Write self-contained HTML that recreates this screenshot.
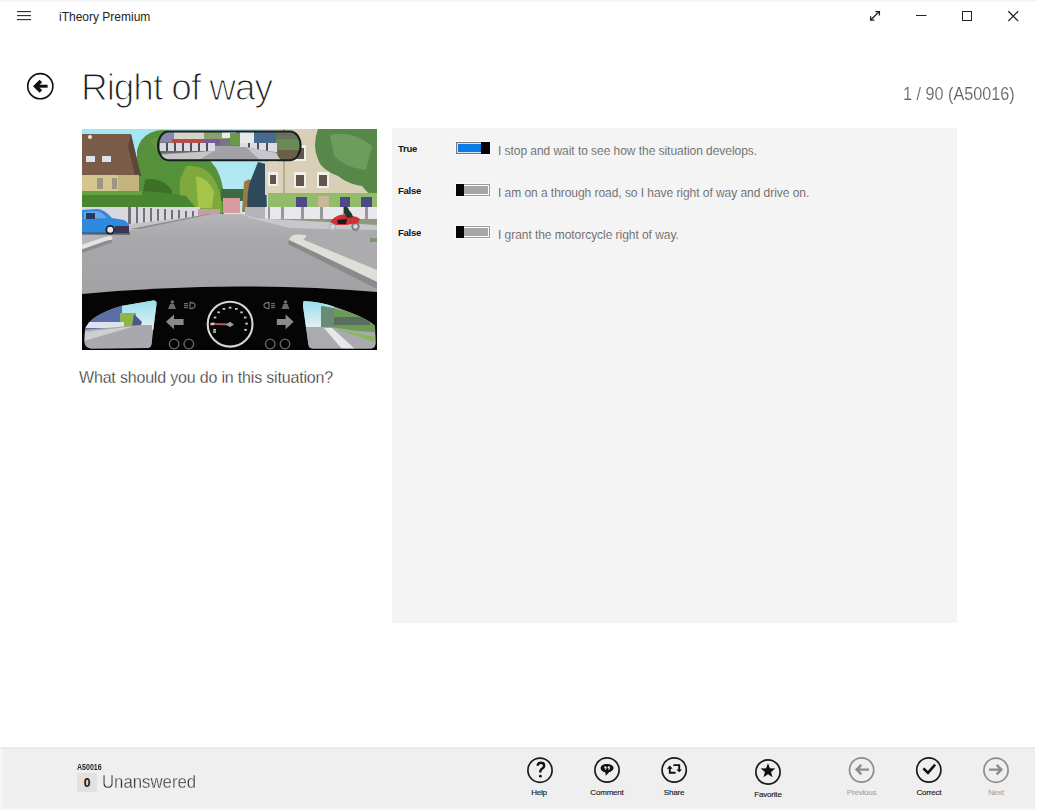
<!DOCTYPE html>
<html><head><meta charset="utf-8">
<style>
html,body{margin:0;padding:0;}
body{width:1037px;height:810px;position:relative;overflow:hidden;background:#fff;font-family:"Liberation Sans",sans-serif;}
.a{position:absolute;}
.t{position:absolute;white-space:nowrap;line-height:1;}
.lbl{font-size:9.6px;font-weight:bold;color:#151515;letter-spacing:-0.3px;}
.ans{font-size:12px;color:#4a4a4a;letter-spacing:-0.05px;-webkit-text-stroke:0.2px #f4f4f4;}
.ab{font-size:8px;color:#222;text-align:center;letter-spacing:-0.2px;-webkit-text-stroke:0.15px currentColor;}
</style></head><body>
<!-- top border -->
<div class="a" style="left:0;top:0;width:1037px;height:1px;background:#f3f3f3"></div><div class="a" style="left:0;top:1px;width:1037px;height:1px;background:#fafafa"></div>
<!-- title bar -->
<svg class="a" style="left:0;top:0" width="1037" height="32">
  <g stroke="#2a2a2a" stroke-width="1.1">
    <line x1="17" y1="11.6" x2="31" y2="11.6"/>
    <line x1="17" y1="15.6" x2="31" y2="15.6"/>
    <line x1="17" y1="19.6" x2="31" y2="19.6"/>
  </g>
  <g stroke="#222" stroke-width="1" fill="none">
    <line x1="871" y1="19.8" x2="879" y2="11.8" stroke-width="1.3"/>
    <polyline points="875.3,11.6 879.4,11.6 879.4,15.4" stroke-width="1.3"/>
    <polyline points="870.6,16.2 870.6,20.2 874.4,20.2" stroke-width="1.3"/>
    <line x1="916" y1="15.5" x2="926.5" y2="15.5"/>
    <rect x="962.5" y="11.5" width="9" height="9"/>
    <line x1="1008.3" y1="11.2" x2="1018.2" y2="21.1" stroke-width="1.25"/>
    <line x1="1018.2" y1="11.2" x2="1008.3" y2="21.1" stroke-width="1.25"/>
  </g>
</svg>
<div class="t" id="apptitle" style="left:59px;top:11px;font-size:12px;color:#222">iTheory Premium</div>

<!-- back button -->
<svg class="a" style="left:20px;top:66px" width="42" height="42">
  <circle cx="20.3" cy="20.2" r="12.55" fill="none" stroke="#111" stroke-width="1.65"/>
  <polygon points="13,20.2 19.6,13.7 22.2,16.2 18.2,20.2 22.2,24.2 19.6,26.7" fill="#111"/><rect x="17" y="18.7" width="10.6" height="3" fill="#111"/>
</svg>
<div class="t" id="title" style="left:81px;top:69px;font-size:37px;color:#1e1e1e;letter-spacing:-1.05px;-webkit-text-stroke:1.2px #fff">Right of way</div>
<div class="t" id="counter" style="left:903px;top:85px;font-size:18.5px;color:#606060;transform:scaleX(0.875);transform-origin:0 0;-webkit-text-stroke:0.15px #fff">1 / 90 (A50016)</div>

<!-- picture -->
<svg class="a" style="left:82px;top:129px" width="295" height="221" viewBox="82 129 295 221">
 <defs>
  <linearGradient id="sky" x1="0" y1="0" x2="0" y2="1">
   <stop offset="0" stop-color="#a2e6f4"/><stop offset="0.3" stop-color="#b8e8f2"/><stop offset="0.45" stop-color="#dcecf0"/><stop offset="1" stop-color="#e6eef0"/>
  </linearGradient>
  <linearGradient id="road" x1="0" y1="0" x2="0" y2="1">
   <stop offset="0" stop-color="#b6b6b8"/><stop offset="0.3" stop-color="#a8a8ab"/><stop offset="1" stop-color="#a2a2a5"/>
  </linearGradient>
  <linearGradient id="msky" x1="0" y1="0" x2="0" y2="1">
   <stop offset="0" stop-color="#94e0ef"/><stop offset="1" stop-color="#e6f0f0"/>
  </linearGradient>
  <filter id="bl" x="-5%" y="-5%" width="110%" height="110%"><feGaussianBlur stdDeviation="0.6"/></filter>
 </defs>
 <rect x="82" y="129" width="295" height="221" fill="url(#sky)"/>
 <g filter="url(#bl)">
 <!-- left trees (behind house) -->
 <rect x="131" y="158" width="14" height="34" fill="#9a6a50"/>
 <path d="M137,150 Q140,138 150,133 Q160,128 170,131 Q186,136 194,150 Q208,156 216,168 Q226,186 224,214 L137,214 Z" fill="#55903a"/>
 <path d="M150,140 Q162,134 174,140 Q170,152 158,152 Z" fill="#62983e"/>
 <path d="M186,166 Q202,164 212,176 Q222,190 222,212 L184,212 Q178,196 180,180 Z" fill="#7eaa3c"/>
 <path d="M196,176 Q208,178 214,192 L212,208 L198,208 Z" fill="#a6c44a"/>
 <path d="M145,180 Q160,176 172,190 L172,212 L140,212 Z" fill="#3c7028"/>
 <!-- left house -->
 <polygon points="82,134 131,134 137,160 141,176 82,176" fill="#7a5c4a"/>
 <polygon points="131,134 141,176 135,176 128,146" fill="#5f4636"/>
 <rect x="86" y="156" width="9" height="6" fill="#dfe2ec"/>
 <rect x="102" y="156" width="9" height="6" fill="#dfe2ec"/>
 <circle cx="90" cy="137" r="2" fill="#e8e8e8"/>
 <rect x="82" y="175" width="57" height="18" fill="#d4c68c"/>
 <rect x="118" y="175" width="21" height="18" fill="#c2b47c"/>
 <rect x="97" y="178" width="6" height="11" fill="#9a9684"/>
 <rect x="112" y="178" width="5" height="11" fill="#9a9684"/>
 <!-- hedge -->
 <path d="M82,193 L140,191 Q165,192 186,196 L196,208 L82,208 Z" fill="#4a8630"/>
 <rect x="82" y="191" width="60" height="4" fill="#66a040"/>
 <!-- far -->
 <rect x="221" y="189" width="24" height="12" fill="#3c6a40"/>
 <rect x="223" y="198" width="17" height="15" fill="#d69aa0"/>
 <path d="M244,182 Q250,176 254,184 L256,212 L242,212 Z" fill="#9a7a48"/>
 <!-- conifer -->
 <path d="M258,162 L266,164 L267,216 L248,216 Q246,196 250,182 Z" fill="#2e4a5a"/>
 <!-- building -->
 <rect x="265" y="129" width="112" height="66" fill="#d8cfb6"/>
 <rect x="265" y="129" width="18" height="66" fill="#ddd3bc"/>
 <rect x="283" y="129" width="2" height="66" fill="#b8ae96"/>
 <g fill="#f2f0ea"><rect x="294" y="172" width="12" height="16"/><rect x="317" y="172" width="12" height="16"/><rect x="294" y="145" width="12" height="16"/><rect x="317" y="145" width="12" height="16"/><rect x="268" y="148" width="10" height="14"/><rect x="268" y="172" width="10" height="14"/></g>
 <g fill="#5e5650"><rect x="296" y="175" width="8" height="11"/><rect x="319" y="175" width="8" height="11"/><rect x="296" y="148" width="8" height="11"/><rect x="319" y="148" width="8" height="11"/><rect x="270" y="151" width="6" height="9"/><rect x="270" y="175" width="6" height="9"/></g>
 <path d="M318,129 L377,129 L377,198 Q370,196 362,186 Q348,184 338,176 Q322,170 318,160 Q312,145 318,129 Z" fill="#58884a"/>
 <path d="M330,135 Q352,130 372,146 L366,170 Q346,168 334,156 Z" fill="#6e9c5a"/>
 <rect x="268" y="193" width="109" height="16" fill="#92bc6a"/>
 <g fill="#4e4a86"><rect x="296" y="197" width="11" height="10"/><rect x="340" y="197" width="10" height="10"/><rect x="361" y="197" width="11" height="10"/></g>
 <rect x="318" y="196" width="11" height="13" fill="#c8b898"/>
 <!-- right fence -->
 <rect x="265" y="207" width="112" height="13" fill="#e8e8ec"/>
 <g fill="#98989c"><rect x="268" y="207" width="2" height="13"/><rect x="281" y="207" width="3" height="13"/><rect x="301" y="207" width="3" height="13"/><rect x="320" y="207" width="3" height="13"/><rect x="343" y="207" width="3" height="13"/><rect x="365" y="207" width="3" height="13"/></g>
 <rect x="245" y="207" width="20" height="12" fill="#b4b4b8"/>
 <rect x="256" y="219" width="121" height="6" fill="#8e9a80"/>
 <!-- left fence -->
 <rect x="82" y="207" width="118" height="17" fill="#d8d8de"/>
 <g fill="#707076">
  <rect x="128" y="207" width="3" height="18"/><rect x="136" y="207" width="2" height="17"/><rect x="143" y="208" width="2" height="16"/>
  <rect x="150" y="208" width="2" height="15"/><rect x="157" y="209" width="2" height="14"/><rect x="164" y="209" width="2" height="13"/>
  <rect x="171" y="210" width="2" height="12"/><rect x="178" y="210" width="2" height="11"/><rect x="185" y="211" width="2" height="10"/><rect x="192" y="211" width="2" height="9"/>
 </g>
 <rect x="198" y="209" width="22" height="8" fill="#c4a0a4"/>
 </g>
 <!-- road -->
 <polygon points="82,236 130,229 208,214 242,214 300,228 377,229 377,296 82,296" fill="url(#road)"/>
 <!-- left sidewalk -->
 <polygon points="129,224 200,216 212,214 140,229 129,230" fill="#c4c4c6"/>
 <polygon points="130,229 140,229 212,214 208,214" fill="#8a8a8e"/>
 <!-- right sidewalk far -->
 <polygon points="242,214 256,218 377,225 377,230 290,228 250,218" fill="#c8c8ca"/>
 <!-- left island -->
 <polygon points="82,234.5 113,234.5 112,238 82,246" fill="#b6b6ba"/>
 <polygon points="82,244.5 105,237 110,236 112.5,237 112,239.8 106,241 82,249.5" fill="#e4e4e2"/>
 <polygon points="82,249.5 106,241 112,239.8 112,242.5 82,253" fill="#8c8c90"/>
 <!-- right island & curb -->
 <path d="M292,237 Q296,235 304,235 L377,236 L377,272 Q340,258 302,241 Z" fill="#acacae"/>
 <path d="M289,240 Q290,234.5 298,234.5 L306,235 Q306,238 303,239.5 L377,270 L377,282 Z" fill="#e0ded8"/>
 <path d="M289,240 L377,282 L377,289 L288,244 Z" fill="#8a8a8c"/>
 <rect x="370" y="238" width="7" height="4" fill="#7a9a6a"/>
 <!-- blue car -->
 <path d="M82,210 L97,209 Q104,209 112,218 L124,220 Q130,223 129,229 L129,233 L82,233.5 Z" fill="#2f8ade"/>
 <path d="M84,212 L97,211 Q102,212 107,218 L84,219 Z" fill="#6aa6e4"/>
 <rect x="86" y="213" width="9" height="6" fill="#243a60"/>
 <rect x="82" y="232.5" width="48" height="2.2" fill="#3a3a40" opacity="0.7"/>
 <circle cx="110.2" cy="229.8" r="4.8" fill="#1e1e26"/><circle cx="110.2" cy="229.8" r="3" fill="#e8e8e8"/>
 <rect x="115" y="226" width="14" height="7" fill="#3e3452"/>
 <!-- motorcycle -->
 <circle cx="332.5" cy="227" r="3.8" fill="#b8b8bc"/><circle cx="332.5" cy="227" r="2" fill="#e0d8d8"/>
 <circle cx="355.5" cy="226.5" r="4.2" fill="#7a7e80"/><circle cx="355.5" cy="226.5" r="2.2" fill="#d8dcdc"/>
 <path d="M330,222 Q334,216 342,214.5 L350,216 Q357,216 360,219 L358,223 L346,225 L336,225 Z" fill="#d03036"/>
 <path d="M337,220 L347,219 L346,224 L338,224 Z" fill="#1a1a1e"/>
 <path d="M344,207 Q348,206 349,210 L352,214 L353,217 L347,218 L344,213 Z" fill="#1e3a2a"/>
 <!-- rear view mirror -->
 <clipPath id="rm"><rect x="158" y="131.4" width="142.6" height="28.8" rx="10.5" ry="14.4"/></clipPath>
 <rect x="158" y="131.4" width="142.6" height="28.8" rx="10.5" ry="14.4" fill="#a4a4a6"/>
 <g clip-path="url(#rm)" filter="url(#bl)">
  <rect x="157" y="130" width="145" height="16" fill="#7a7484"/>
  <rect x="160" y="130" width="14" height="12" fill="#8a86b0"/>
  <rect x="174" y="131" width="30" height="9" fill="#d6d2c8"/>
  <rect x="172" y="139" width="36" height="6" fill="#b05048"/>
  <rect x="204" y="139" width="16" height="6" fill="#7a5a9a"/>
  <rect x="204" y="131" width="24" height="8" fill="#8aa070"/>
  <rect x="222" y="130" width="14" height="8" fill="#e8ecea"/>
  <rect x="230" y="133" width="14" height="12" fill="#6a9a4a"/>
  <rect x="240" y="130" width="14" height="16" fill="#e6e8ea"/>
  <rect x="254" y="130" width="22" height="15" fill="#4a6a90"/>
  <rect x="276" y="130" width="26" height="10" fill="#6a7060"/>
  <rect x="276" y="139" width="26" height="23" fill="#6a8a52"/>
  <rect x="278" y="150" width="24" height="12" fill="#6a5e48"/>
  <rect x="160" y="143" width="55" height="9" fill="#dadae2"/>
  <g fill="#50505a"><rect x="166" y="143" width="2" height="9"/><rect x="174" y="143" width="2" height="9"/><rect x="182" y="143" width="2" height="9"/><rect x="190" y="143" width="2" height="9"/><rect x="198" y="143" width="2" height="9"/><rect x="206" y="143" width="2" height="9"/></g>
  <rect x="240" y="143" width="37" height="9" fill="#dcdce4"/>
  <g fill="#50505a"><rect x="248" y="143" width="2" height="9"/><rect x="257" y="143" width="2" height="9"/><rect x="266" y="143" width="2" height="9"/></g>
  <rect x="158" y="151" width="60" height="3" fill="#6a6a62"/>
  <polygon points="157,154 215,151 235,147 245,147 276,152 276,162 157,162" fill="#a2a2a6"/>
  <polygon points="157,155 214,151 195,162 157,162" fill="#c6c6c8"/>
  <polygon points="246,147 276,153 282,162 262,162" fill="#c8c8cc"/>
 </g>
 <rect x="158" y="131.4" width="142.6" height="28.8" rx="10.5" ry="14.4" fill="none" stroke="#15201c" stroke-width="2"/>
 <!-- dashboard -->
 <path d="M82,294 Q230,280 377,292 L377,350 L82,350 Z" fill="#050505"/>
 <!-- left side mirror -->
 <path id="lmp" d="M121,306 L153,300.5 Q157,300 156.5,304 L151.5,344 Q151,348 147,348 L91,348.5 Q84.5,348 84.5,341 L85,330 Q88,316 121,306 Z" fill="#a6a6aa"/>
 <clipPath id="lm"><path d="M121,306 L153,300.5 Q157,300 156.5,304 L151.5,344 Q151,348 147,348 L91,348.5 Q84.5,348 84.5,341 L85,330 Q88,316 121,306 Z"/></clipPath>
 <g clip-path="url(#lm)" filter="url(#bl)">
  <rect x="84" y="300" width="74" height="30" fill="url(#msky)"/>
  <polygon points="84,300 122,300 122,328 84,330" fill="#5a6ea8"/>
  <rect x="120" y="313" width="16" height="14" fill="#8fb44a"/>
  <polygon points="134,314 142,322 140,327 132,326" fill="#4a5a8a"/>
  <rect x="84" y="322" width="40" height="6" fill="#dfe2ec"/>
  <polygon points="84,330 140,325 152,325 152,349 84,349" fill="#a8a8ae"/>
  <polygon points="84,332 135,326 84,341" fill="#cfcfd2"/>
 </g>
 <!-- right side mirror -->
 <path d="M304,301 Q322,302 335,307 Q368,318 375,326 L375.5,343 Q375.5,348.5 370,348.5 L312,348.5 Q309,348 308.5,345 L303,306 Q303,301 304,301 Z" fill="#a8a8ac"/>
 <clipPath id="rmm"><path d="M304,301 Q322,302 335,307 Q368,318 375,326 L375.5,343 Q375.5,348.5 370,348.5 L312,348.5 Q309,348 308.5,345 L303,306 Q303,301 304,301 Z"/></clipPath>
 <g clip-path="url(#rmm)" filter="url(#bl)">
  <rect x="302" y="300" width="32" height="28" fill="url(#msky)"/>
  <polygon points="322,306 377,318 377,332 322,330" fill="#6a9c52"/>
  <rect x="332" y="317" width="38" height="8" fill="#5a6e60"/>
  <polygon points="321,306 334,308 334,328 321,328" fill="#6a8a78"/>
  <polygon points="304,327 330,327 377,334 377,349 304,349" fill="#aaaab0"/>
  <polygon points="324,328 332,328 355,349 342,349" fill="#e8e8ea"/>
  <polygon points="332,328 377,337 377,343 350,334" fill="#8ab860"/>
 </g>
 <!-- speedometer -->
 <circle cx="230.1" cy="324.2" r="22.4" fill="#050505" stroke="#d6d6d6" stroke-width="2.1"/>
 <rect x="213.30" y="328.94" width="2.6" height="1.8" fill="#c8c8c8"/><rect x="212.31" y="322.72" width="2.6" height="1.8" fill="#c8c8c8"/><rect x="213.73" y="316.59" width="2.6" height="1.8" fill="#c8c8c8"/><rect x="217.34" y="311.43" width="2.6" height="1.8" fill="#c8c8c8"/><rect x="222.62" y="308.00" width="2.6" height="1.8" fill="#c8c8c8"/><rect x="228.80" y="306.80" width="2.6" height="1.8" fill="#c8c8c8"/><rect x="234.98" y="308.00" width="2.6" height="1.8" fill="#c8c8c8"/><rect x="240.26" y="311.43" width="2.6" height="1.8" fill="#c8c8c8"/><rect x="243.87" y="316.59" width="2.6" height="1.8" fill="#c8c8c8"/><rect x="245.29" y="322.72" width="2.6" height="1.8" fill="#c8c8c8"/><rect x="244.30" y="328.94" width="2.6" height="1.8" fill="#c8c8c8"/>
 <line x1="210.6" y1="323.9" x2="230" y2="324.5" stroke="#b86068" stroke-width="1.8"/>
 <rect x="210.5" y="322.8" width="3.5" height="2.4" fill="#e0c0c0"/>
 <polygon points="226,324.5 230,321.8 234,324.6 230,327.2" fill="#9a9a9a"/>
 <rect x="213" y="331" width="3" height="2" fill="#8aa08a"/>
 <!-- arrows -->
 <polygon points="166,321.8 174,314.4 174,319 183.6,319 183.6,325 174,325 174,329.3" fill="#8a8a8a"/>
 <polygon points="293.6,321.8 285.6,314.4 285.6,319 276.8,319 276.8,325 285.6,325 285.6,329.3" fill="#8a8a8a"/>
 <g fill="none" stroke="#6a6a6a" stroke-width="1.3">
  <circle cx="174.1" cy="344" r="4.8"/><circle cx="188.8" cy="344" r="4.8"/>
  <circle cx="270.2" cy="344" r="4.8"/><circle cx="285" cy="344" r="4.8"/>
  <path d="M190,302.5 Q195,302.5 195,305.5 Q195,308.5 190,308.5 Z"/>
  <path d="M269,302.5 Q264,302.5 264,305.5 Q264,308.5 269,308.5 Z"/>
 </g>
 <g fill="#6a6a6a">
  <circle cx="172.3" cy="302" r="1.8"/><polygon points="170,304 174,304 176,309 168,309"/>
  <rect x="184" y="303" width="4" height="1.2"/><rect x="184" y="305" width="4" height="1.2"/><rect x="184" y="307" width="4" height="1.2"/>
  <rect x="271" y="303" width="4" height="1.2"/><rect x="271" y="305" width="4" height="1.2"/><rect x="271" y="307" width="4" height="1.2"/>
  <circle cx="285.5" cy="302" r="1.8"/><polygon points="283.5,304 287.5,304 289.5,309 281.5,309"/>
 </g>
</svg>


<div class="t" id="question" style="left:79px;top:369.5px;font-size:16px;color:#2a2a2a;letter-spacing:-0.18px;-webkit-text-stroke:0.3px #fff">What should you do in this situation?</div>

<!-- panel -->
<div class="a" style="left:392px;top:128px;width:565px;height:495px;background:#f4f4f4"></div>


<!-- answers -->
<div class="t lbl" style="left:398px;top:143.5px">True</div>
<div class="t lbl" style="left:398px;top:185.5px">False</div>
<div class="t lbl" style="left:398px;top:227.5px">False</div>
<svg class="a" style="left:450px;top:136px" width="48" height="110">
  <!-- true toggle -->
  <rect x="5.5" y="5.5" width="35" height="13" fill="#fff"/>
  <rect x="6.5" y="6.5" width="33" height="11" fill="#cfe6f8" stroke="#767676" stroke-width="1"/>
  <rect x="8" y="8" width="23" height="8" fill="#0a7ae6"/>
  <rect x="31" y="6" width="9" height="12" fill="#050505"/>
  <!-- false toggle 1 -->
  <rect x="5.5" y="47.5" width="35" height="13" fill="#fff"/>
  <rect x="6.5" y="48.5" width="33" height="11" fill="#fdfdfd" stroke="#9a9a9a" stroke-width="1"/>
  <rect x="13" y="50" width="25" height="8" fill="#a6a6a6"/>
  <rect x="6" y="48" width="8" height="12" fill="#050505"/>
  <!-- false toggle 2 -->
  <rect x="5.5" y="89.5" width="35" height="13" fill="#fff"/>
  <rect x="6.5" y="90.5" width="33" height="11" fill="#fdfdfd" stroke="#9a9a9a" stroke-width="1"/>
  <rect x="13" y="92" width="25" height="8" fill="#a6a6a6"/>
  <rect x="6" y="90" width="8" height="12" fill="#050505"/>
</svg>
<div class="t ans" style="left:498px;top:145px">I stop and wait to see how the situation develops.</div>
<div class="t ans" style="left:498px;top:187px">I am on a through road, so I have right of way and drive on.</div>
<div class="t ans" style="left:498px;top:229px">I grant the motorcycle right of way.</div>

<!-- bottom bar -->
<div class="a" style="left:0;top:747px;width:1035px;height:63px;background:#efefef"></div>
<div class="a" style="left:0;top:747px;width:1035px;height:2px;background:#ebebeb"></div>
<div class="a" style="left:0;top:808px;width:1035px;height:2px;background:#f5f5f5"></div>
<div class="a" style="left:0;top:749px;width:2px;height:59px;background:#f6f6f6"></div>
<div class="t" style="left:76.5px;top:762.5px;font-size:8.6px;font-weight:bold;color:#222;transform:scaleX(0.82);transform-origin:0 0">A50016</div>
<div class="a" style="left:77px;top:773px;width:20px;height:19px;background:#e1e1e1"></div>
<div class="t" style="left:77px;top:777px;width:20px;text-align:center;font-size:12px;font-weight:bold;color:#111">0</div>
<div class="t" style="left:102px;top:772px;font-size:19px;color:#303030;transform:scaleX(0.883);transform-origin:0 0;-webkit-text-stroke:0.35px #efefef">Unanswered</div>
<svg class="a" style="left:500px;top:747px" width="535" height="63">
 <g fill="none" stroke-width="1.7">
  <circle cx="40" cy="23.2" r="12.1" stroke="#1a1a1a"/>
  <circle cx="107" cy="23" r="12.1" stroke="#1a1a1a"/>
  <circle cx="174.2" cy="23" r="12.1" stroke="#1a1a1a"/>
  <circle cx="268" cy="25" r="12.1" stroke="#1a1a1a"/>
  <circle cx="361.6" cy="23" r="12.1" stroke="#8c8c8c"/>
  <circle cx="428.8" cy="23" r="12.1" stroke="#1a1a1a"/>
  <circle cx="496" cy="23.2" r="12.1" stroke="#8c8c8c"/>
 </g>
 <!-- help ? -->
 <path d="M37.6,18.8 C37.7,16.8 39.1,15.8 40.8,15.8 C42.8,15.8 44.2,17 44.2,18.7 C44.2,20.5 42.7,21.2 41.5,22.2 C40.5,23 40.2,23.8 40.2,25.6" fill="none" stroke="#111" stroke-width="2.4"/>
 <circle cx="40.4" cy="29.2" r="1.4" fill="#111"/>
 <!-- comment bubble -->
 <path d="M106.8,16.9 C110.8,16.9 113.6,18.6 113.6,20.9 C113.6,22.8 111.6,24.2 109.4,25 L105.8,28.8 L105.4,25.4 C102.4,24.6 100.6,23 100.6,20.9 C100.6,18.6 103,16.9 106.8,16.9 Z" fill="#111"/>
 <g fill="#fff"><circle cx="105.3" cy="20.4" r="1.05"/><circle cx="108.7" cy="20.4" r="1.05"/></g>
 <g stroke="#fff" stroke-width="0.8" fill="none"><path d="M106.2,20.4 Q106.3,22.3 104.9,23"/><path d="M109.6,20.4 Q109.7,22.3 108.3,23"/></g>
 <!-- share -->
 <g stroke="#111" stroke-width="1.9" fill="none">
  <polyline points="169.8,20.8 169.8,25.7 175.6,25.7"/>
  <polyline points="173.4,18.1 179.2,18.1 179.2,23.2"/>
 </g>
 <polygon points="166.9,21.7 169.8,18.6 172.7,21.7" fill="#111"/>
 <polygon points="176.3,22.5 179.2,25.3 182.1,22.5" fill="#111"/>
 <!-- star -->
 <polygon points="268.00,16.20 269.90,21.28 275.32,21.52 271.08,24.90 272.53,30.13 268.00,27.13 263.47,30.13 264.92,24.90 260.68,21.52 266.10,21.28" fill="#111"/>
 <!-- previous arrow -->
 <path d="M357,22.6 L369,22.6 M361.4,17.8 L356.6,22.6 L361.4,27.4" fill="none" stroke="#8c8c8c" stroke-width="2.4"/>
 <!-- check -->
 <polyline points="423.4,21.3 428,25.9 435.1,17.6" fill="none" stroke="#111" stroke-width="2.6"/>
 <!-- next arrow -->
 <path d="M501,22.6 L489,22.6 M496.6,17.8 L501.4,22.6 L496.6,27.4" fill="none" stroke="#8c8c8c" stroke-width="2.4"/>
</svg>
<div class="t ab" style="left:499px;top:789px;width:80px">Help</div>
<div class="t ab" style="left:567px;top:789px;width:80px">Comment</div>
<div class="t ab" style="left:634px;top:789px;width:80px">Share</div>
<div class="t ab" style="left:728px;top:790.5px;width:80px">Favorite</div>
<div class="t ab" style="left:821.6px;top:789px;width:80px;color:#a8a8a8">Previous</div>
<div class="t ab" style="left:888.8px;top:789px;width:80px">Correct</div>
<div class="t ab" style="left:956px;top:789px;width:80px;color:#a8a8a8">Next</div>

</body></html>
